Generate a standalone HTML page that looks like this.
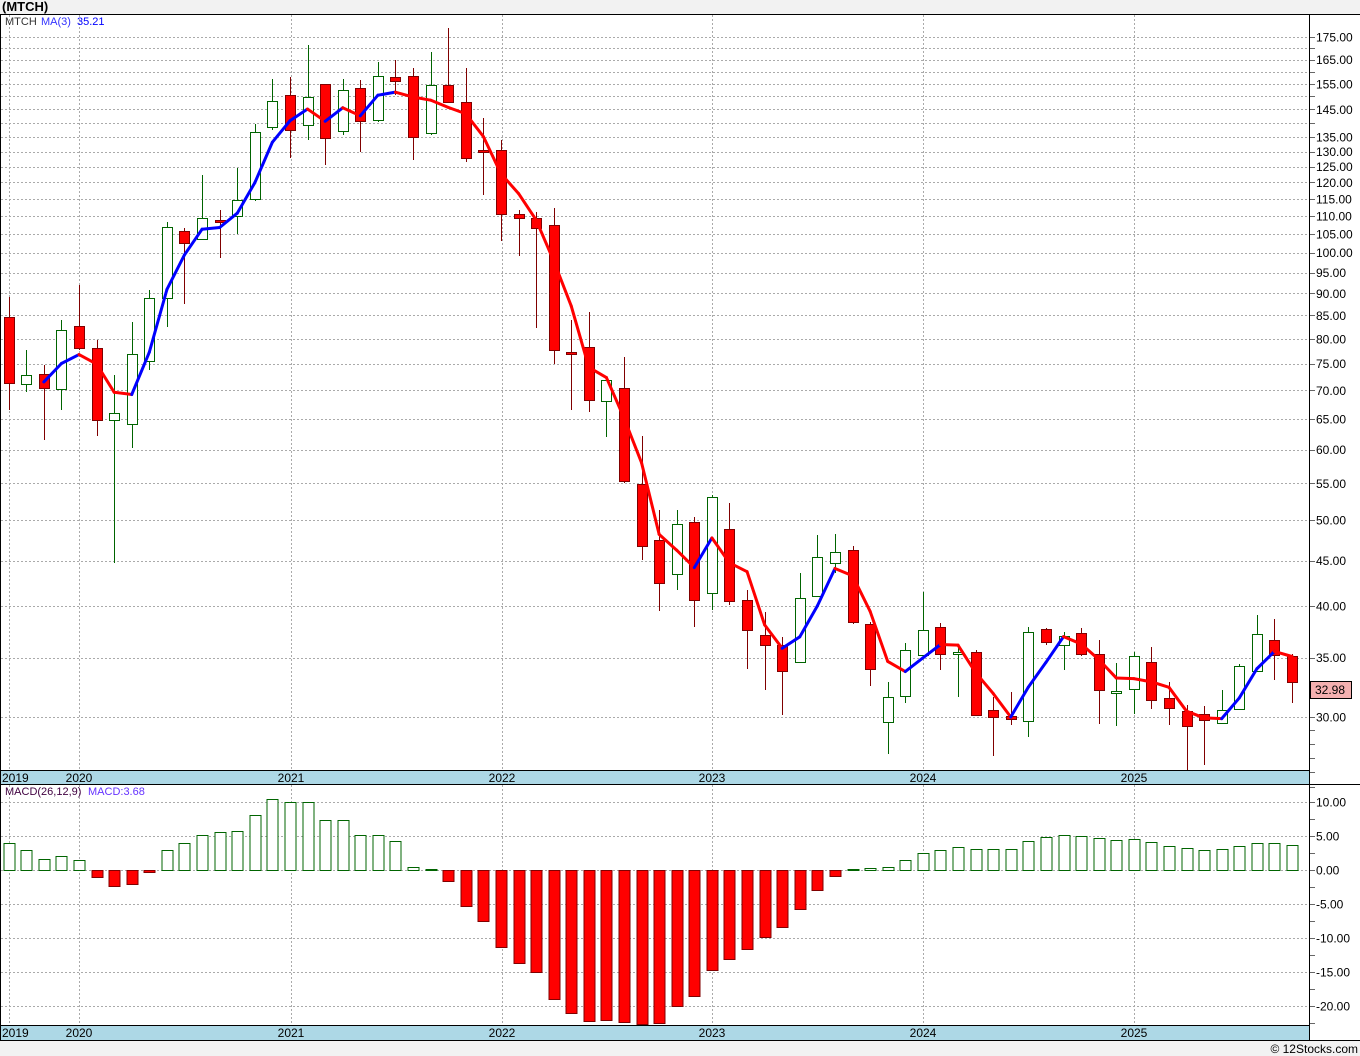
<!DOCTYPE html>
<html><head><meta charset="utf-8"><style>
html,body{margin:0;padding:0;background:#f2f2f2;width:1360px;height:1056px;overflow:hidden}
svg{display:block;font-family:"Liberation Sans",sans-serif}
</style></head><body>
<svg id="s" width="1360" height="1056" xmlns="http://www.w3.org/2000/svg"></svg>
<script>
var s=document.getElementById('s');var o='';
o+='<rect x="0" y="0" width="1360" height="1056" fill="#f2f2f2"/>';
o+='<rect x="0" y="14" width="1360" height="1026" fill="#fff"/>';
o+='<text x="2" y="11" font-size="13" font-weight="bold" fill="#000">(MTCH)</text>';
function Y(p){return 717-385.6*Math.log(p/30);}
var g=[175,170,165,160,155,150,145,140,135,130,125,120,115,110,105,100,95,90,85,80,75,70,65,60,55,50,45,40,35,30];
var lab=[175,165,155,145,135,130,125,120,115,110,105,100,95,90,85,80,75,70,65,60,55,50,45,40,35,30];
g.forEach(function(p){var y=Math.round(Y(p))+0.5;o+='<line x1="1" x2="1309" y1="'+y+'" y2="'+y+'" stroke="#aaa" stroke-dasharray="2,2"/><line x1="1309" x2="1315" y1="'+y+'" y2="'+y+'" stroke="#666"/>';});
[29,28,27,26,25].forEach(function(p){var y=Math.round(Y(p))+0.5;o+='<line x1="1309" x2="1315" y1="'+y+'" y2="'+y+'" stroke="#666"/>';});
lab.forEach(function(p){o+='<text x="1316" y="'+(Y(p)+4.5)+'" font-size="12" fill="#000">'+p.toFixed(2)+'</text>';});
var yrs=[[79,'2020'],[291,'2021'],[502,'2022'],[712,'2023'],[923,'2024'],[1134,'2025']];
[9,79,291,502,712,923,1134].forEach(function(x){o+='<line x1="'+(x+.5)+'" x2="'+(x+.5)+'" y1="15" y2="770" stroke="#aaa" stroke-dasharray="2,2"/><line x1="'+(x+.5)+'" x2="'+(x+.5)+'" y1="785" y2="1025" stroke="#aaa" stroke-dasharray="2,2"/>';});
var mg=[[10,802],[5,836],[0,870],[-5,904],[-10,938],[-15,972],[-20,1006]];
mg.forEach(function(m){var y=m[1]+0.5;o+='<line x1="1" x2="1309" y1="'+y+'" y2="'+y+'" stroke="#aaa" stroke-dasharray="2,2"/><line x1="1309" x2="1315" y1="'+y+'" y2="'+y+'" stroke="#666"/><text x="1316" y="'+(m[1]+4.5)+'" font-size="12" fill="#000">'+(m[0]>=0?'':'-')+Math.abs(m[0]).toFixed(2)+'</text>';});
[819,853,887,921,955,989,1023].forEach(function(y){o+='<line x1="1309" x2="1315" y1="'+(y+.5)+'" y2="'+(y+.5)+'" stroke="#666"/>';});
var C=[
['r',317,383,297,410],['w',375,384,350,392],['r',374,388,365,440],['w',330,389,320,410],['r',326,348,285,350],
['r',348,420,340,436],['w',413,420,375,563],['w',354,424,322,448],['w',298,361,290,370],['w',227,298,222,327],
['r',231,243,228,304],['w',218,239,175,240],['r',220,222,210,258],['w',200,216,168,234],['w',132,199,124,201],
['w',101,127,79,130],['r',95,130,77,158],['w',97,125,45,140],['r',84,138,84,165],['w',90,131,79,135],
['r',88,121,80,152],['w',76,120,62,122],['r',77,81,60,95],['r',76,137,68,160],['w',85,133,52,135],
['r',85,102,28,102],['r',102,158,68,162],['r',150,152,118,195],['r',150,214,140,241],['r',214,218,210,256],
['r',218,228,212,328],['r',225,350,208,364],['r',352,354,320,410],['r',347,400,312,412],['w',380,401,378,437],
['r',388,481,357,483],['r',484,546,436,560],['r',540,583,510,611],['w',524,574,510,590],['r',522,600,517,627],
['w',497,593,495,610],['r',529,601,503,605],['r',600,630,590,669],['r',635,645,612,690],['r',645,671,637,715],
['w',598,662,573,662],['w',557,596,535,597],['w',552,563,534,573],['r',550,622,546,624],['r',624,669,622,686],
['w',697,722,682,754],['w',650,696,643,703],['w',630,655,592,656],['r',627,654,623,670],['w',652,654,648,697],
['r',652,715,650,716],['r',710,717,697,756],['r',716,719,692,725],['w',632,721,627,737],['r',629,642,628,645],
['w',636,645,632,670],['r',633,654,628,656],['r',654,690,640,724],['w',691,693,663,726],['w',656,689,652,714],
['r',662,700,647,709],['r',698,708,682,725],['r',711,726,705,770],['r',714,720,706,765],['w',710,723,690,724],
['w',666,709,664,710],['w',634,671,615,671],['r',640,655,619,680],['r',656,682,654,703]];
var M=[843,850,859,856,860,-877,-886,-884,-872,850,843,835,832,831,815,799,802,802,820,820,835,835,841,867,869,-881,-906,-921,-947,-963,-972,-999,-1013,-1021,-1020,-1022,-1024,-1023,-1006,-996,-970,-959,-949,-937,-927,-909,-890,-876,869,868,867,860,853,850,847,849,849,849,841,837,835,836,838,840,839,842,846,848,850,849,846,843,843,845];
var closes=[];
C.forEach(function(c,i){var x=8.7+17.58*i;var cx=Math.round(x)+0.5;var red=c[0]=='r';
 var col=red?'#800000':'#006400';
 o+='<line x1="'+cx+'" x2="'+cx+'" y1="'+c[3]+'" y2="'+c[4]+'" stroke="'+col+'"/>';
 var h=Math.max(c[2]-c[1],1);
 o+='<rect x="'+(cx-5)+'" y="'+(c[1]+.5)+'" width="10" height="'+h+'" fill="'+(red?'#ff0000':'#fff')+'" stroke="'+col+'"/>';
 var cy=red?c[2]:c[1];closes.push(30*Math.exp((717-cy)/385.6));
 var m=M[i];
 if(m>0){o+='<rect x="'+(cx-5.5)+'" y="'+(m+.5)+'" width="11" height="'+(870-m)+'" fill="#fff" stroke="#006400"/>';}
 else{m=-m;o+='<rect x="'+(cx-5.5)+'" y="870.5" width="11" height="'+(m-870)+'" fill="#ff0000" stroke="#800000"/>';}
});
var pts=[];for(var i=2;i<closes.length;i++){var a=(closes[i]+closes[i-1]+closes[i-2])/3;pts.push([8.7+17.58*i,Y(a)]);}
for(var i=1;i<pts.length;i++){var up=pts[i][1]<pts[i-1][1];o+='<line x1="'+pts[i-1][0]+'" y1="'+pts[i-1][1]+'" x2="'+pts[i][0]+'" y2="'+pts[i][1]+'" stroke="'+(up?'#0000ff':'#ff0000')+'" stroke-width="3" stroke-linecap="round"/>';}
o+='<text x="5" y="25" font-size="11" fill="#333">MTCH</text><text x="41" y="25" font-size="11" fill="#3333ff">MA(3)</text><text x="77" y="25" font-size="11" fill="#0000ff">35.21</text>';
o+='<rect x="0" y="770" width="1309" height="14" fill="#add8e6"/><rect x="0" y="1025" width="1309" height="15" fill="#add8e6"/>';
o+='<line x1="0" x2="1309" y1="770.5" y2="770.5" stroke="#000"/><line x1="0" x2="1360" y1="784.5" y2="784.5" stroke="#000"/>';
o+='<line x1="0" x2="1309" y1="1025.5" y2="1025.5" stroke="#000"/><line x1="0" x2="1360" y1="1040.5" y2="1040.5" stroke="#000"/>';
o+='<text x="2" y="782" font-size="12">2019</text><text x="2" y="1037" font-size="12">2019</text>';
yrs.forEach(function(a){o+='<text x="'+a[0]+'" y="782" font-size="12" text-anchor="middle">'+a[1]+'</text><text x="'+a[0]+'" y="1037" font-size="12" text-anchor="middle">'+a[1]+'</text>';});
o+='<text x="5" y="795" font-size="11" fill="#400040">MACD(26,12,9)</text><text x="88" y="795" font-size="11" fill="#6633ff">MACD:3.68</text>';
o+='<line x1="0" x2="1360" y1="14.5" y2="14.5" stroke="#000"/><line x1="0.5" x2="0.5" y1="14" y2="1040" stroke="#000"/><line x1="1309.5" x2="1309.5" y1="14" y2="1041" stroke="#000"/>';
o+='<rect x="1310.5" y="681.5" width="41" height="17" fill="#f4b0b0" stroke="#000"/><text x="1315" y="694" font-size="12">32.98</text>';
o+='<text x="1358" y="1053" font-size="12" text-anchor="end">© 12Stocks.com</text>';
s.innerHTML=o;
</script>
</body></html>
